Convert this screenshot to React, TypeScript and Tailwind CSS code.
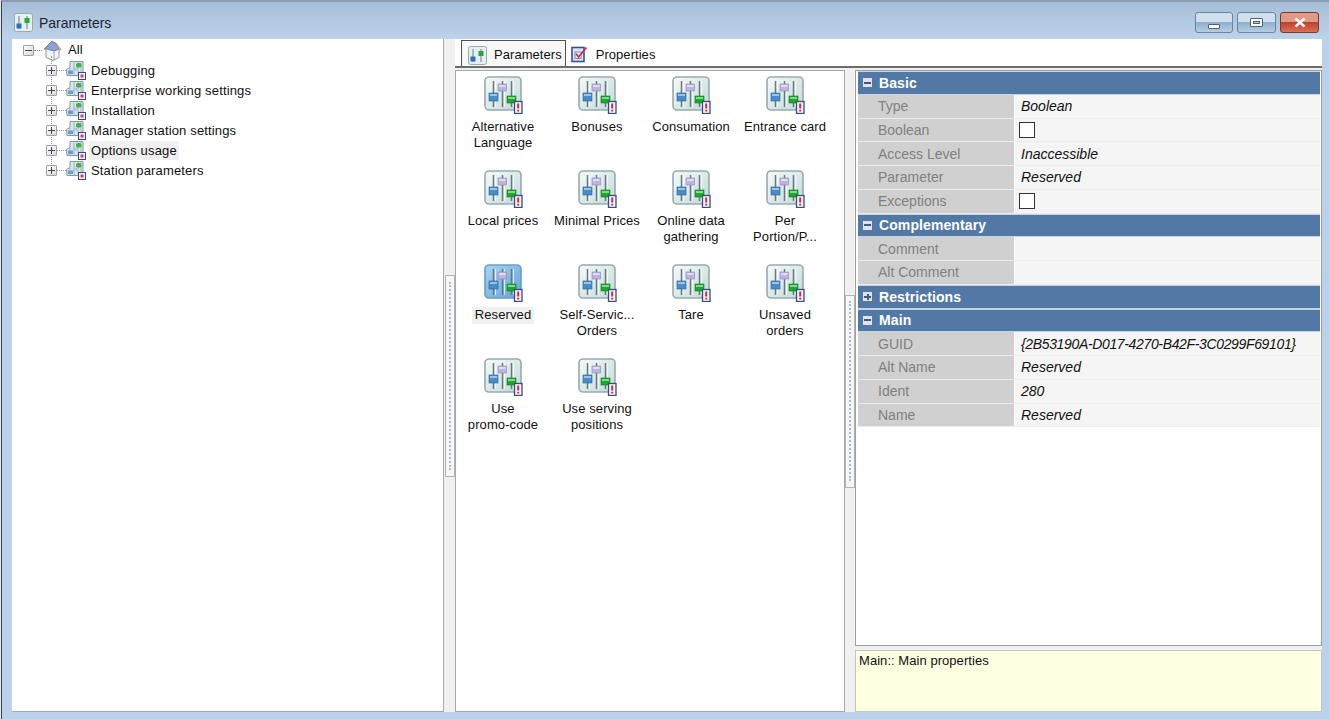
import React from 'react';

const treeItems = [
  'Debugging',
  'Enterprise working settings',
  'Installation',
  'Manager station settings',
  'Options usage',
  'Station parameters',
];

const paramItems = [
  ['Alternative', 'Language'],
  ['Bonuses'],
  ['Consumation'],
  ['Entrance card'],
  ['Local prices'],
  ['Minimal Prices'],
  ['Online data', 'gathering'],
  ['Per', 'Portion/P...'],
  ['Reserved'],
  ['Self-Servic...', 'Orders'],
  ['Tare'],
  ['Unsaved', 'orders'],
  ['Use', 'promo-code'],
  ['Use serving', 'positions'],
];

type Row =
  | { kind: 'group'; label: string; open: boolean }
  | { kind: 'text'; label: string; value?: string }
  | { kind: 'check'; label: string };

const propRows: Row[] = [
  { kind: 'group', label: 'Basic', open: true },
  { kind: 'text', label: 'Type', value: 'Boolean' },
  { kind: 'check', label: 'Boolean' },
  { kind: 'text', label: 'Access Level', value: 'Inaccessible' },
  { kind: 'text', label: 'Parameter', value: 'Reserved' },
  { kind: 'check', label: 'Exceptions' },
  { kind: 'group', label: 'Complementary', open: true },
  { kind: 'text', label: 'Comment' },
  { kind: 'text', label: 'Alt Comment' },
  { kind: 'group', label: 'Restrictions', open: false },
  { kind: 'group', label: 'Main', open: true },
  { kind: 'text', label: 'GUID', value: '{2B53190A-D017-4270-B42F-3C0299F69101}' },
  { kind: 'text', label: 'Alt Name', value: 'Reserved' },
  { kind: 'text', label: 'Ident', value: '280' },
  { kind: 'text', label: 'Name', value: 'Reserved' },
];

function SlidersIcon({ selected = false }: { selected?: boolean }) {
  const id = selected ? 'slSel' : 'slNorm';
  return (
    <svg width="39" height="38" viewBox="0 0 39 38">
      <defs>
        <linearGradient id={id} x1="0" y1="0" x2="1" y2="1">
          <stop offset="0" stopColor={selected ? '#a8d4f2' : '#f6fafa'} />
          <stop offset="1" stopColor={selected ? '#5fa6dc' : '#bfdad8'} />
        </linearGradient>
      </defs>
      <rect x="1" y="1" width="36" height="33" rx="4" fill={`url(#${id})`} stroke={selected ? '#6f9cbc' : '#9aa9ae'} strokeWidth="1.6" />
      <path d="M9.5 5v26M18.5 5v26M27.5 5v26" stroke="#68787f" strokeWidth="1.5" />
      <path d="M11.5 5v26M20.5 5v26M29.5 5v26" stroke="#ffffff" strokeWidth="1" opacity="0.75" />
      <rect x="5" y="17" width="9" height="8" fill="#4a8cc8" stroke="#2b5f95" strokeWidth="0.6" />
      <rect x="6" y="18" width="7" height="2" fill="#9cc4e8" />
      <rect x="14" y="8" width="8.5" height="7" fill="#bdb4e0" stroke="#8d84b8" strokeWidth="0.6" />
      <rect x="15" y="9" width="6.5" height="2" fill="#e0dcf4" />
      <rect x="23" y="20" width="9" height="7" fill="#1fa62c" stroke="#157a20" strokeWidth="0.6" />
      <rect x="24" y="21" width="7" height="2" fill="#7ede86" />
      <rect x="30.5" y="25.5" width="7.5" height="12" fill="#f8f2f4" stroke="#2f4f86" strokeWidth="1.3" />
      <path d="M34.2 27.5v5M34.2 33.8v1.7" stroke="#d8283c" strokeWidth="2" />
    </svg>
  );
}

function SmallSliders() {
  return (
    <svg width="19" height="19" viewBox="0 0 19 19">
      <rect x="0.5" y="0.5" width="18" height="18" rx="2" fill="#e6f0f0" stroke="#9aa9ae" />
      <path d="M5 3v13M13 3v13" stroke="#6c7c84" strokeWidth="1" />
      <rect x="2.5" y="10.5" width="5" height="5" fill="#2f6fb5" />
      <rect x="10.5" y="5" width="5" height="5" fill="#2aa836" />
    </svg>
  );
}

function PropertiesIcon() {
  return (
    <svg width="17" height="17" viewBox="0 0 17 17">
      <rect x="1" y="1.5" width="12" height="14" fill="#dfe6f6" stroke="#34509a" strokeWidth="1.6" />
      <rect x="4" y="6" width="6" height="6.5" fill="#ffffff" stroke="#7286bc" />
      <path d="M5 7.5l2.5 3.5L15.5 1.5" fill="none" stroke="#d8303c" strokeWidth="1.8" />
    </svg>
  );
}

function TreeIcon() {
  return (
    <svg width="20" height="20" viewBox="0 0 20 20">
      <path d="M0.5 9.5l3.5-2V1.5h13V15.5H1z" fill="#d8e8ec" stroke="#84999f" />
      <path d="M4 8v7M8 2.5v13M12 2.5v13M15 2.5v13" stroke="#98abb3" strokeWidth="0.8" />
      <rect x="10" y="3" width="5.5" height="4.5" rx="1.8" fill="#3fb24a" />
      <rect x="2" y="10.5" width="5" height="3.5" fill="#6d9ecf" />
      <rect x="7" y="7.5" width="4" height="3" fill="#b9bfe0" />
      <rect x="12.5" y="12.5" width="7" height="7" fill="#f5eef4" stroke="#2f4f86" />
      <rect x="14.5" y="14.5" width="3" height="3" fill="#d83c78" />
    </svg>
  );
}

function HouseIcon() {
  return (
    <svg width="21" height="21" viewBox="0 0 21 21">
      <path d="M2 9l7.5-7.5 4 1.5 5.5 6.5-2 1v7l-6 3-7-3V10z" fill="#f3f3f3" stroke="#8f98a0" />
      <path d="M9.5 1.5L3 8.5l9 2.5 5.5-2L13.5 3z" fill="#8fa0d8" stroke="#6f7fb8" />
      <path d="M12 11v9.5" stroke="#9aa2aa" />
      <path d="M14 2.5l5 6.5-1.5 1z" fill="#d8b24a" />
    </svg>
  );
}

function Expander({ open }: { open: boolean }) {
  return (
    <span className="relative flex h-[11px] w-[11px] shrink-0 items-center justify-center rounded-[1px] border border-[#a0a0a0] bg-[linear-gradient(135deg,#ffffff,#d8d8d8)]">
      <span className="relative block h-px w-[7px] bg-[#404858]">
        {!open && <span className="absolute left-[3px] top-[-3px] block h-[7px] w-px bg-[#404858]" />}
      </span>
    </span>
  );
}

function Grip({ height }: { height: string }) {
  return (
    <div className={`flex w-[10px] items-center justify-center border border-[#b4b4b4] bg-[#f6f6f6] ${height}`}>
      <div className="h-[94%] border-l-2 border-dotted border-[#a8bcd8]" />
    </div>
  );
}

function PropCheck() {
  return <span className="block h-[16px] w-[16px] border border-[#333333] bg-white" />;
}

function PropertyRow({ row }: { row: Row }) {
  if (row.kind === 'group') {
    return (
      <div className="flex h-[23.75px] items-center border-y border-[#c6d4e4] bg-[#5279a6] pl-[5px] font-bold text-white">
        <span className="flex h-[9px] w-[9px] items-center justify-center bg-[#e0e4ea]">
          <span className="relative block h-[2px] w-[7px] bg-[#40597c]">
            {!row.open && <span className="absolute left-[2.5px] top-[-2px] block h-[6px] w-[2px] bg-[#40597c]" />}
          </span>
        </span>
        <span className="ml-[7px] tracking-[0.1px]">{row.label}</span>
      </div>
    );
  }
  return (
    <div className="flex h-[23.75px] border-b border-[#ececec]">
      <div className="flex w-[156px] shrink-0 items-center bg-[#d0d0d0] pl-[20px] text-[#808080]">{row.label}</div>
      <div className={`ml-px flex flex-1 items-center bg-[#f5f5f5] pl-[6px] italic text-[#111111] ${row.label === 'GUID' ? 'tracking-[-0.35px]' : ''}`}>
        {row.kind === 'check' ? <span className="-ml-[2px]"><PropCheck /></span> : row.value}
      </div>
    </div>
  );
}

export default function App() {
  return (
    <div className="h-[719px] w-[1329px] overflow-hidden bg-[#e4e8ee] pl-px font-['Liberation_Sans',sans-serif] text-[14px] leading-[16px] text-[#111111]">
      <div className="flex h-full flex-col border-l border-t-2 border-l-[#3c4048] border-t-[#8f9fb2] bg-[#b9d1ea]">
        {/* Title bar */}
        <div className="flex h-[37px] shrink-0 items-center justify-between bg-[linear-gradient(to_bottom,#a5bdd6,#bcd3ea)] pl-[12px] pr-[10px] pt-[4px]">
          <div className="flex items-center gap-[6px]">
            <SmallSliders />
            <span className="text-[#1c2630]">Parameters</span>
          </div>
          <div className="flex gap-[4px]">
            <div className="flex h-[21px] w-[38px] items-center justify-center rounded-[3px] border border-[#6a84a0] bg-[linear-gradient(to_bottom,#cfdfee_45%,#8fb0cf_50%,#b5cde2)]">
              <span className="mt-[7px] block h-[5px] w-[12px] rounded-[1px] border border-[#4d5f76] bg-white" />
            </div>
            <div className="flex h-[21px] w-[39px] items-center justify-center rounded-[3px] border border-[#6a84a0] bg-[linear-gradient(to_bottom,#cfdfee_45%,#8fb0cf_50%,#b5cde2)]">
              <span className="flex h-[9px] w-[13px] items-center justify-center rounded-[1px] border border-[#4d5f76] bg-white">
                <span className="block h-[3px] w-[7px] border border-[#4d5f76] bg-[#b5cde2]" />
              </span>
            </div>
            <div className="flex h-[21px] w-[39px] items-center justify-center rounded-[3px] border border-[#7a3a30] bg-[linear-gradient(to_bottom,#e09a88_45%,#c2402a_50%,#d8705a)]">
              <svg width="14" height="11" viewBox="0 0 14 11">
                <path d="M2.5 1.5l9 8M11.5 1.5l-9 8" stroke="#f4f4f4" strokeWidth="2.6" />
              </svg>
            </div>
          </div>
        </div>

        {/* Client area */}
        <div className="flex min-h-0 flex-1 pb-[7px] pl-[10px] pr-[7px]">
          {/* Tree */}
          <div className="w-[432px] shrink-0 border-r border-b border-[#a8a8a8] bg-white pl-[11px] pt-px text-[13px] tracking-[0.15px]">
            <div className="flex h-[20px] items-center">
              <Expander open />
              <span className="w-[8px] border-t border-dotted border-[#909090]" />
              <HouseIcon />
              <span className="ml-[5px]">All</span>
            </div>
            <div className="relative">
              <span className="absolute bottom-[10px] left-[28px] top-[-4px] border-l border-dotted border-[#909090]" />
              {treeItems.map((item) => (
                <div key={item} className="flex h-[20px] items-center pl-[23px]">
                  <Expander open={false} />
                  <span className="w-[9px] border-t border-dotted border-[#909090]" />
                  <TreeIcon />
                  <span className={`ml-[3px] flex h-[19px] items-center px-[2px] pt-px ${item === 'Options usage' ? 'bg-[#f0f0f0]' : ''}`}>
                    {item}
                  </span>
                </div>
              ))}
            </div>
          </div>

          {/* Splitter */}
          <div className="flex w-[11px] shrink-0 items-center justify-center bg-[#f0f0f0]">
            <Grip height="h-[202px]" />
          </div>

          <div className="flex min-w-0 flex-1 flex-col">
            {/* Tabs */}
            <div className="flex h-[29px] shrink-0 items-end border-b-2 border-[#6c6c6c] bg-white pl-[6px] text-[13px] tracking-[0.05px]">
              <div className="flex h-[26px] items-center gap-[7px] border-x border-t border-[#505050] bg-[#f8f8f8] pl-[6px] pr-[3px] pt-[3px]">
                <SmallSliders />
                <span>Parameters</span>
              </div>
              <div className="flex h-[26px] items-center gap-[8px] pl-[5px] pt-[3px]">
                <PropertiesIcon />
                <span>Properties</span>
              </div>
            </div>

            <div className="flex min-h-0 flex-1 bg-[#f0f0f0] pt-[2px]">
              {/* Parameter icons */}
              <div className="w-[390px] shrink-0 border border-[#a8a8a8] bg-white text-[13px] tracking-[0.1px]">
                <div className="grid grid-cols-[repeat(4,94px)] auto-rows-[94px] pt-[5px]">
                  {paramItems.map((lines) => {
                    const selected = lines[0] === 'Reserved';
                    return (
                      <div key={lines[0]} className="flex flex-col items-center">
                        <SlidersIcon selected={selected} />
                        <div className={`mt-[5px] px-[3px] pb-[1px] text-center ${selected ? 'bg-[#f0f0f0]' : ''}`}>
                          {lines.map((line) => (
                            <div key={line}>{line}</div>
                          ))}
                        </div>
                      </div>
                    );
                  })}
                </div>
              </div>

              {/* Splitter */}
              <div className="flex w-[10px] shrink-0 items-center justify-center">
                <Grip height="h-[193px]" />
              </div>

              {/* Property grid */}
              <div className="flex min-w-0 flex-1 flex-col">
                <div className="min-h-0 flex-1 border border-[#a0a0a0] bg-white pl-[2px] pr-[1px]">
                  {propRows.map((row) => (
                    <PropertyRow key={row.label + row.kind} row={row} />
                  ))}
                </div>
                <div className="mt-[4px] h-[62px] shrink-0 border border-[#c4c4c4] bg-[#ffffe1] pl-[3px] pt-[2px] text-[13px] tracking-[0.05px]">
                  Main:: Main properties
                </div>
              </div>
            </div>
          </div>
        </div>
      </div>
    </div>
  );
}
